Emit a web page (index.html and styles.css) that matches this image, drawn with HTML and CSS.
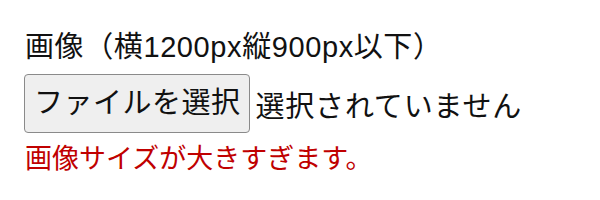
FILE: index.html
```
<!DOCTYPE html>
<html lang="ja">
<head>
    <meta charset="UTF-8">
    <meta name="viewport" content="width=device-width, initial-scale=1.0">
    <title>画像アップロード</title>
    <link rel="stylesheet" href="styles.css">
</head>
<body>

    <div class="container">
        <label class="field-label" for="imageFile">画像（横1200px縦900px以下）</label>

        <div class="file-row">
            <button type="button" class="file-button" id="imageFile">ファイルを選択</button>
            <span class="file-name">選択されていません</span>
        </div>

        <p class="error-message">画像サイズが大きすぎます。</p>
    </div>

</body>
</html>
```

FILE: styles.css
```
body {
    font-family: 'Liberation Sans', 'Noto Sans CJK JP', sans-serif;
    background-color: #fff;
    color: #111;
    margin: 0;
    padding: 0;
}

.container {
    padding: 30px 24px 0 24px;
}

.field-label {
    display: block;
    font-size: 29px;
    line-height: 34px;
    letter-spacing: 0.6px;
    margin-left: 1px;
}

.file-row {
    display: flex;
    align-items: center;
    margin-top: 10px;
}

.file-button {
    font-family: inherit;
    font-size: 29px;
    line-height: 34px;
    letter-spacing: 0.5px;
    color: #111;
    background-color: #efefef;
    border: 1px solid #8a8a8a;
    border-radius: 4px;
    padding: 11px 8px 12px 9px;
    margin: 0;
}

.file-name {
    font-size: 29px;
    letter-spacing: 0.8px;
    margin-left: 6px;
}

.error-message {
    font-size: 27px;
    line-height: 32px;
    color: #c00000;
    margin: 10px 0 0 1px;
}
```
